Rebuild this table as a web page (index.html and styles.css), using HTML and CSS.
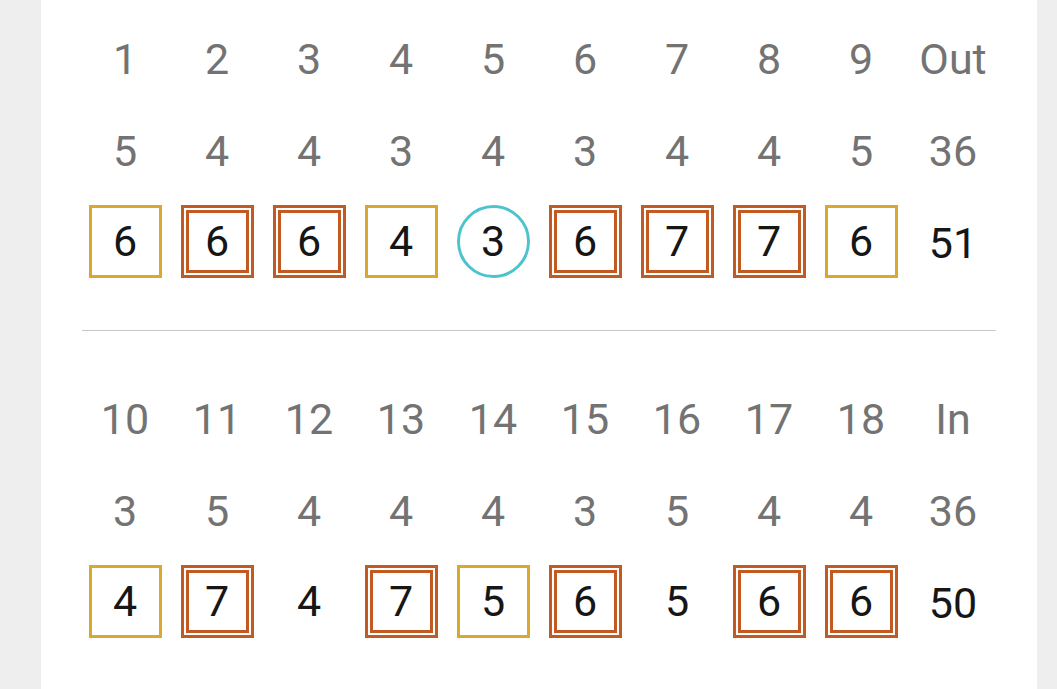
FILE: index.html
```html
<!DOCTYPE html>
<html>
<head>
<meta charset="utf-8">
<link rel="stylesheet" href="styles.css">
</head>
<body>
<div class="card">
  <div class="grid">
    <div class="cell head">1</div><div class="cell head">2</div><div class="cell head">3</div><div class="cell head">4</div><div class="cell head">5</div><div class="cell head">6</div><div class="cell head">7</div><div class="cell head">8</div><div class="cell head">9</div><div class="cell head">Out</div>
    <div class="cell head">5</div><div class="cell head">4</div><div class="cell head">4</div><div class="cell head">3</div><div class="cell head">4</div><div class="cell head">3</div><div class="cell head">4</div><div class="cell head">4</div><div class="cell head">5</div><div class="cell head">36</div>
    <div class="cell"><span class="mark bogey">6</span></div>
    <div class="cell"><span class="mark double">6</span></div>
    <div class="cell"><span class="mark double">6</span></div>
    <div class="cell"><span class="mark bogey">4</span></div>
    <div class="cell"><span class="mark birdie">3</span></div>
    <div class="cell"><span class="mark double">6</span></div>
    <div class="cell"><span class="mark double">7</span></div>
    <div class="cell"><span class="mark double">7</span></div>
    <div class="cell"><span class="mark bogey">6</span></div>
    <div class="cell">51</div>
  </div>
  <hr class="divider">
  <div class="grid">
    <div class="cell head">10</div><div class="cell head">11</div><div class="cell head">12</div><div class="cell head">13</div><div class="cell head">14</div><div class="cell head">15</div><div class="cell head">16</div><div class="cell head">17</div><div class="cell head">18</div><div class="cell head">In</div>
    <div class="cell head">3</div><div class="cell head">5</div><div class="cell head">4</div><div class="cell head">4</div><div class="cell head">4</div><div class="cell head">3</div><div class="cell head">5</div><div class="cell head">4</div><div class="cell head">4</div><div class="cell head">36</div>
    <div class="cell"><span class="mark bogey">4</span></div>
    <div class="cell"><span class="mark double">7</span></div>
    <div class="cell"><span class="mark">4</span></div>
    <div class="cell"><span class="mark double">7</span></div>
    <div class="cell"><span class="mark bogey">5</span></div>
    <div class="cell"><span class="mark double">6</span></div>
    <div class="cell"><span class="mark">5</span></div>
    <div class="cell"><span class="mark double">6</span></div>
    <div class="cell"><span class="mark double">6</span></div>
    <div class="cell">50</div>
  </div>
</div>
</body>
</html>
```

FILE: styles.css
```css
html, body {
  margin: 0;
  padding: 0;
  background: #eeeeee;
  height: 100%;
  overflow: hidden;
}
body {
  font-family: Roboto, "Noto Sans", sans-serif;
}
.card {
  margin: 0 20px 0 41px;
  width: 920px;
  padding: 13px 38px 20px;
  background: #ffffff;
  min-height: 660px;
}
.grid {
  display: grid;
  grid-template-columns: repeat(10, 92px);
  grid-auto-rows: 92px;
}
.cell {
  display: flex;
  align-items: center;
  justify-content: center;
  font-size: 43px;
  color: #161616;
}
.cell.head {
  color: #737373;
}
.mark {
  box-sizing: border-box;
  width: 73px;
  height: 73px;
  margin-bottom: 3px;
  display: flex;
  align-items: center;
  justify-content: center;
  line-height: 1;
}
.bogey {
  border: 3px solid #d8a92c;
}
.double {
  border: 3px solid #c35a22;
  box-shadow: inset 0 0 0 2px #ffffff, inset 0 0 0 5px #c35a22;
}
.birdie {
  border: 3px solid #4cc3cd;
  border-radius: 50%;
}
.divider {
  border: 0;
  height: 1px;
  background: #c8c8c8;
  margin: 41px 3px 42px;
}
```
